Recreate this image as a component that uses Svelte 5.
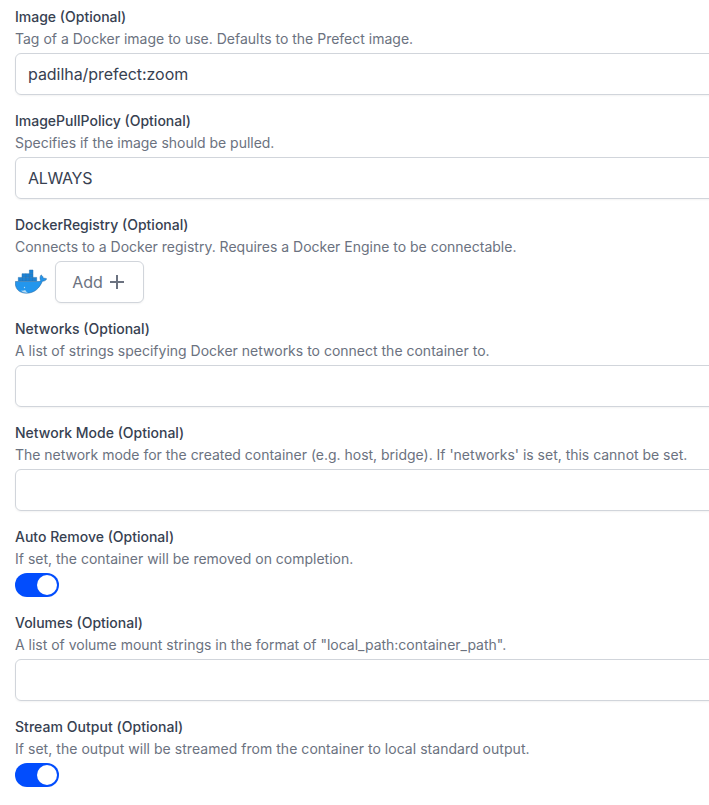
<script>
  const fields = [
    { label: 'Image', text: 'Tag of a Docker image to use. Defaults to the Prefect image.', kind: 'input', value: 'padilha/prefect:zoom', valueTracking: -0.05 },
    { label: 'ImagePullPolicy', text: 'Specifies if the image should be pulled.', kind: 'input', value: 'ALWAYS', valueTracking: -0.3, tracking: -0.02 },
    { label: 'DockerRegistry', text: 'Connects to a Docker registry. Requires a Docker Engine to be connectable.', kind: 'block', tracking: -0.005 },
    { label: 'Networks', text: 'A list of strings specifying Docker networks to connect the container to.', kind: 'input', value: '' },
    { label: 'Network Mode', text: "The network mode for the created container (e.g. host, bridge). If 'networks' is set, this cannot be set.", kind: 'input', value: '', tracking: -0.015 },
    { label: 'Auto Remove', text: 'If set, the container will be removed on completion.', kind: 'toggle' },
    { label: 'Volumes', text: 'A list of volume mount strings in the format of "local_path:container_path".', kind: 'input', value: '', tracking: -0.01 },
    { label: 'Stream Output', text: 'If set, the output will be streamed from the container to local standard output.', kind: 'toggle', tracking: 0.037, labelTracking: 0.04 }
  ];
</script>

<main>
  <form>
    {#each fields as field}
      <section>
        <div class="label" style:letter-spacing="{field.labelTracking ?? 0}px">{field.label} (Optional)</div>
        <div class="description" style:letter-spacing="{field.tracking ?? 0}px">{field.text}</div>
        {#if field.kind === 'input'}
          <div class="input" style:letter-spacing="{field.valueTracking ?? 0}px">{field.value}</div>
        {:else if field.kind === 'toggle'}
          <div class="toggle" role="switch" aria-checked="true" aria-label={field.label} tabindex="0"><span></span></div>
        {:else}
          <div class="block">
            <svg class="docker" width="32" height="32" viewBox="0 -0.7 32 32">
              <g fill="#2396ed" stroke="#1c5f99" stroke-width=".5" stroke-linejoin="round">
                <path d="M.4 14.8H23c1.3 0 2.2-.3 2.8-.8-1.2-1.6-1-4.2.3-5.8 1.4.9 2.1 2.1 2.2 3.4 1.2-.3 2.4-.1 3.4.5-.8 1.7-2.3 2.4-4.3 2.4C24.6 21.3 19.6 26.5 11.5 26.5 4.3 26.5.3 22.4.3 16.4c0-.7 0-1.1.1-1.6Z" />
                <path fill="#1b83d6" stroke="#2472b2" d="M3.3 10.7h3.6v3.6H3.3zM7 10.7h3.6v3.6H7zM10.7 10.7h3.6v3.6h-3.6zM14.4 10.7H18v3.6h-3.6zM18.1 10.7h3.6v3.6h-3.6zM7 7h3.6v3.6H7zM10.7 7h3.6v3.6h-3.6zM14.4 7H18v3.6h-3.6zM14.4 3.3H18v3.6h-3.6z" />
              </g>
              <path d="M6 23.9c1.7.1 3.2-.1 4.3-.5.2 1.2 1.2 2.1 2.8 2.6-3.2.4-5.7-.4-7.1-2.1Z" fill="#b9dcf3" />
              <circle cx="9.5" cy="20.8" r=".65" fill="#b9dcf3" />
            </svg>
            <button type="button">
              Add
              <svg width="20" height="20" viewBox="0 0 20 20" fill="none" stroke="currentColor" stroke-width="2"><path d="M10 3v14M3 10h14" /></svg>
            </button>
          </div>
        {/if}
      </section>
    {/each}
  </form>
</main>

<style>
  main {
    box-sizing: border-box;
    height: 805px;
    padding: 7px 0 0 15px;
    overflow: hidden;
    background: #fff;
    color: #374151;
    font-family: Inter, 'Liberation Sans', sans-serif;
  }
  form {
    display: flex;
    flex-direction: column;
    gap: 16px;
    width: 720px;
  }
  .label, .description {
    font-size: 14px;
    line-height: 20px;
    white-space: nowrap;
  }
  .label { font-weight: 500; }
  .description {
    margin: 2px 0 4px;
    color: #6b7280;
  }
  .input {
    box-sizing: border-box;
    height: 42px;
    padding: 8px 12px;
    border: 1px solid #d1d5db;
    border-radius: 6px;
    box-shadow: 0 1px 2px #0000000d;
    font-size: 16px;
    line-height: 24px;
  }
  .toggle {
    display: flex;
    justify-content: flex-end;
    box-sizing: border-box;
    width: 44px;
    height: 24px;
    padding: 2px;
    border-radius: 12px;
    background: #024dfd;
  }
  .toggle span {
    width: 20px;
    height: 20px;
    border-radius: 50%;
    background: #fff;
  }
  .block {
    display: flex;
    align-items: center;
    gap: 8px;
    height: 42px;
  }
  button {
    display: flex;
    align-items: center;
    justify-content: center;
    gap: 4px;
    box-sizing: border-box;
    width: 89px;
    height: 42px;
    padding: 0;
    border: 1px solid #d1d5db;
    border-radius: 6px;
    background: #fff;
    box-shadow: 0 1px 2px #0000000d;
    color: #6b7280;
    font: 400 16px/24px Inter, 'Liberation Sans', sans-serif;
  }
</style>
